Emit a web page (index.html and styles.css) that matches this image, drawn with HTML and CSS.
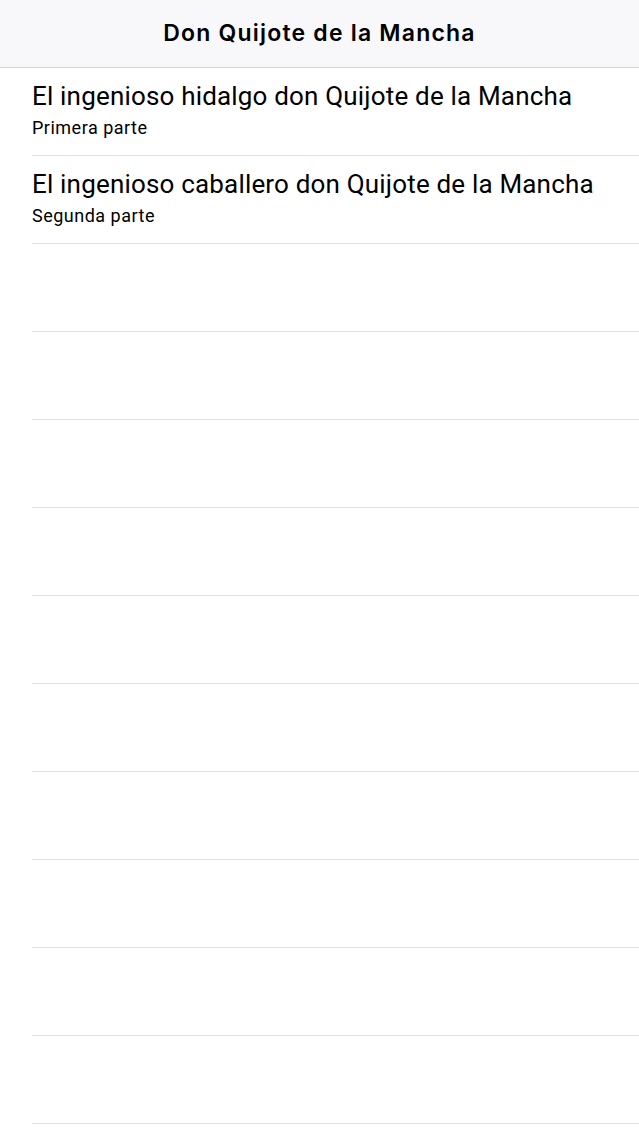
FILE: index.html
```html
<!DOCTYPE html>
<html>
<head>
<meta charset="utf-8">
<link rel="stylesheet" href="styles.css">
</head>
<body>
<header class="navbar"><h1 class="nav-title">Don Quijote de la Mancha</h1></header>
<ul class="table">
  <li class="cell"><div class="cell-body"><div class="cell-title">El ingenioso hidalgo don Quijote de la Mancha</div><div class="cell-sub">Primera parte</div></div></li>
  <li class="cell"><div class="cell-body"><div class="cell-title">El ingenioso caballero don Quijote de la Mancha</div><div class="cell-sub">Segunda parte</div></div></li>
  <li class="cell"><div class="cell-body"></div></li>
  <li class="cell"><div class="cell-body"></div></li>
  <li class="cell"><div class="cell-body"></div></li>
  <li class="cell"><div class="cell-body"></div></li>
  <li class="cell"><div class="cell-body"></div></li>
  <li class="cell"><div class="cell-body"></div></li>
  <li class="cell"><div class="cell-body"></div></li>
  <li class="cell"><div class="cell-body"></div></li>
  <li class="cell"><div class="cell-body"></div></li>
  <li class="cell"><div class="cell-body"></div></li>
  <li class="cell"><div class="cell-body"></div></li>
</ul>
</body>
</html>
```
FILE: styles.css
```css
html, body {
  margin: 0;
  padding: 0;
  background: #ffffff;
  height: 1136px;
  overflow: hidden;
}
body {
  font-family: Roboto, "Noto Sans", sans-serif;
  color: #000;
}
.navbar {
  box-sizing: border-box;
  height: 68px;
  background: #f8f7f9;
  border-bottom: 1px solid #d6d6d8;
  display: flex;
  justify-content: center;
}
.nav-title {
  margin: 0;
  font-family: Inter, Roboto, sans-serif;
  font-size: 23px;
  line-height: 67px;
  font-weight: 600;
  letter-spacing: 1.2px;
  color: #000;
}
.table {
  list-style: none;
  margin: 0;
  padding: 0;
}
.cell {
  padding-left: 32px;
}
.cell-body {
  box-sizing: border-box;
  height: 88px;
  padding-top: 13px;
  border-bottom: 1px solid #e0e0e2;
}
.cell-title {
  font-size: 26px;
  line-height: 30px;
  letter-spacing: 0.18px;
  white-space: nowrap;
}
.cell-sub {
  font-size: 18px;
  line-height: 22px;
  letter-spacing: 0.5px;
  margin-top: 6px;
  color: #000;
}
```
